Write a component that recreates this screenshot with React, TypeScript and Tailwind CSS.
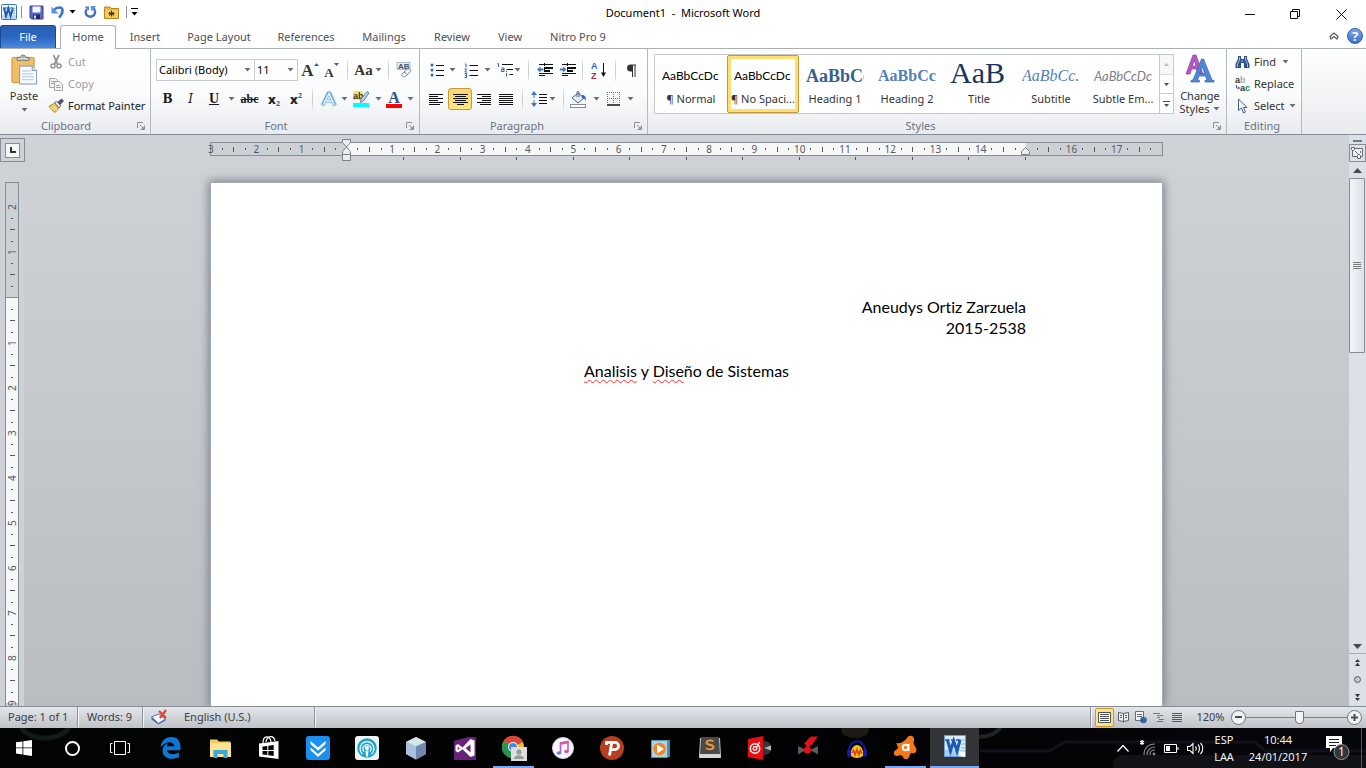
import React from "react";
import type { ReactNode } from "react";

type Kids = { children?: ReactNode };

/* ---------- shared pieces ---------- */

function Caret({ dark = false }: { dark?: boolean }) {
  return (
    <svg width="7" height="4" viewBox="0 0 7 4" className={dark ? "shrink-0 text-black" : "shrink-0 text-[#6a6e73]"} aria-hidden="true">
      <path d="M0.5 0h6L3.5 3.6z" fill="currentColor" />
    </svg>
  );
}

function DropCaret({ label }: { label: string }) {
  return (
    <button aria-label={label} className="flex h-[22px] w-[10px] shrink-0 items-center justify-center">
      <Caret />
    </button>
  );
}

function Tool({ label, className = "w-[22px]", children }: Kids & { label: string; className?: string }) {
  return (
    <button aria-label={label} title={label} className={`flex h-[22px] shrink-0 items-center justify-center ${className}`}>
      {children}
    </button>
  );
}

function Divider({ className = "mx-1" }: { className?: string }) {
  return <span className={`h-[22px] w-px shrink-0 bg-linear-to-b from-[#eceef0] via-[#c3c7cc] to-[#e3e5e8] ${className}`} />;
}

function Launcher({ label }: { label: string }) {
  return (
    <button aria-label={label} className="flex h-3 w-3 items-center justify-center text-[#8b9097]">
      <svg width="8" height="8" viewBox="0 0 8 8" fill="none" stroke="currentColor" aria-hidden="true">
        <path d="M0.5 6V0.5H6M3 3l3 3M7.5 3.5v4h-4" />
        <path d="M7 4.5V7H4.5z" fill="currentColor" stroke="none" />
      </svg>
    </button>
  );
}

function Group({ title, launcher = true, className = "", titleClass = "", children }: Kids & { title: string; launcher?: boolean; className?: string; titleClass?: string }) {
  return (
    <section aria-label={title} className={`flex shrink-0 flex-col border-r border-[#b4b9c0] bg-linear-to-b from-white via-[#fbfcfd] to-[#e8ebef] ${className}`}>
      <div className="min-h-0 flex-1">{children}</div>
      <div className="flex h-[17px] items-center pr-[3px]">
        <h2 className={`flex-1 pl-3 text-center text-[#6b7280] ${titleClass}`}>{title}</h2>
        <span className="flex w-3 justify-end">{launcher && <Launcher label={`${title} options`} />}</span>
      </div>
    </section>
  );
}

/* ---------- title bar ---------- */

function WordLogo({ size }: { size: number }) {
  return (
    <svg width={size} height={size} viewBox="0 0 16 16" aria-hidden="true">
      <rect x="0.5" y="0.5" width="15" height="15" rx="1" fill="#eaf3fc" stroke="#3d78bd" />
      <path d="M1 11h14v4H1z" fill="#b9d6f2" />
      <path d="M2 4h3.6M5.4 4h3M9 4h3.6" stroke="#1a559e" strokeWidth="1.2" />
      <path d="M3 4l2 8 2.4-7.6L9.6 12 12 4" fill="none" stroke="#1c5cab" strokeWidth="2" />
      <path d="M11.5 4.5h2.5M12 7h2M11.500 9.500h2.500" stroke="#74a5d8" />
    </svg>
  );
}

function TitleBar() {
  return (
    <header className="grid h-6 shrink-0 grid-cols-[1fr_auto_1fr] items-center">
      <div className="flex items-center pl-[1px]">
        <WordLogo size={16} />
        <span className="mx-1 h-3 w-px bg-[#8d9197]" />
        <button aria-label="Save" className="ml-[3px] flex w-[22px] items-center">
          <svg width="15" height="15" viewBox="0 0 15 15" aria-hidden="true">
            <path d="M1 1h13v13H2.500L1 12.500z" fill="#5a68c8" stroke="#39418f" />
            <path d="M3.500 1.500h8v6h-8z" fill="#f4f6ff" />
            <path d="M4 9.500h7v4.500H4z" fill="#23295c" />
            <path d="M5 10.500h2v3H5z" fill="#dfe4f8" />
          </svg>
        </button>
        <button aria-label="Undo" className="flex w-[18px] items-center">
          <svg width="14" height="14" viewBox="0 0 14 14" aria-hidden="true">
            <path d="M3 5C6 1.500 11.500 1.500 11.500 5.500c0 3-1.500 5-3.500 7" fill="none" stroke="#3f74c6" strokeWidth="2.600" />
            <path d="M0.500 1.500v7H7.500z" fill="#5b91dc" />
          </svg>
        </button>
        <button aria-label="Undo history" className="flex w-[15px] items-center"><Caret dark /></button>
        <button aria-label="Repeat" className="flex w-[20px] items-center">
          <svg width="13" height="14" viewBox="0 0 13 14" aria-hidden="true">
            <path d="M3 4C0.500 7 1.500 11.500 6.500 11.700 11.500 11.500 12.500 6 9 2.500" fill="none" stroke="#3f74c6" strokeWidth="2.400" />
            <path d="M6.500 1h5.500L7.500 6.500z" fill="#5b91dc" />
            <path d="M0.500 1.500h4.500v4z" fill="#4a80d0" />
          </svg>
        </button>
        <button aria-label="Open folder" className="flex w-[22px] items-center">
          <svg width="15" height="13" viewBox="0 0 15 13" aria-hidden="true">
            <path d="M0.500 2.500V1H6l1 1.500h7.500v10H0.500z" fill="#eab845" stroke="#b98216" />
            <path d="M1 4h13v8H1z" fill="#f5ca62" />
            <path d="M7.500 4.500v6M5 6l5 3.500M10 6L5 9.500M4.500 7.500h6" stroke="#3c3220" />
          </svg>
        </button>
        <span className="mr-1 h-3 w-px bg-[#8d9197]" />
        <button aria-label="Customize quick access toolbar" className="flex flex-col items-center gap-[3px]">
          <span className="h-px w-[7px] bg-black" />
          <Caret dark />
        </button>
      </div>
      <h1 className="pt-[2px] text-[11px] leading-4 text-black">Document1&nbsp; - &nbsp;Microsoft Word</h1>
      <div className="flex items-center justify-end pt-1">
        <button aria-label="Minimize" className="flex h-5 w-[46px] items-center justify-center">
          <svg width="10" height="10" aria-hidden="true"><path d="M0 5.500h10" stroke="#111" /></svg>
        </button>
        <button aria-label="Restore" className="flex h-5 w-[44px] items-center justify-center">
          <svg width="10" height="10" fill="none" stroke="#111" aria-hidden="true"><path d="M0.500 2.500h7v7h-7zM2.500 2.500v-2h7v7h-2" /></svg>
        </button>
        <button aria-label="Close" className="flex h-5 w-[49px] items-center justify-center">
          <svg width="11" height="11" fill="none" stroke="#111" aria-hidden="true"><path d="M0.500 0.500l10 10M10.500 0.500l-10 10" /></svg>
        </button>
      </div>
    </header>
  );
}

/* ---------- ribbon tabs ---------- */

const tabs = [
  { name: "Insert", width: "w-[58px]" },
  { name: "Page Layout", width: "w-[90px]" },
  { name: "References", width: "w-[84px]" },
  { name: "Mailings", width: "w-[72px]" },
  { name: "Review", width: "w-[64px]" },
  { name: "View", width: "w-[52px]" },
  { name: "Nitro Pro 9", width: "w-[84px]" },
];

function TabRow() {
  return (
    <nav className="flex h-[25px] shrink-0 items-end border-b border-[#abb0b6] text-[#4b4f54]">
      <button className="h-[23px] w-14 rounded-t-[3px] border border-b-0 border-[#1d4a95] bg-linear-to-b from-[#2a5fb4] via-[#2c66bf] to-[#4a8be0] text-white">File</button>
      <button className="-mb-px ml-1 h-6 w-[56px] rounded-t-[3px] border border-b-0 border-[#abb0b6] bg-white pb-[2px]">Home</button>
      {tabs.map((t) => (
        <button key={t.name} className={`h-[22px] ${t.width}`}>{t.name}</button>
      ))}
      <div className="ml-auto flex items-center gap-2 self-center pr-[3px]">
        <button aria-label="Minimize the ribbon">
          <svg width="10" height="8" viewBox="0 0 10 8" fill="none" stroke="#55595e" strokeWidth="1.200" aria-hidden="true">
            <path d="M1 4.500L5 1l4 3.500L8 7 5 4.500 2 7z" />
          </svg>
        </button>
        <button aria-label="Help" className="flex h-4 w-4 items-center justify-center rounded-full border border-[#2b5cae] bg-linear-to-b from-[#7aa7ea] to-[#3a70cb] text-[13px] leading-none font-bold text-white">?</button>
      </div>
    </nav>
  );
}

/* ---------- ribbon groups ---------- */

function Clipboard() {
  return (
    <Group title="Clipboard" titleClass="pr-[15px]" className="w-[151px]">
      <div className="flex h-full pt-[2px]">
        <button className="flex w-[48px] flex-col items-center pt-[3px] text-[#333]">
          <svg width="28" height="31" viewBox="0 0 28 32" aria-hidden="true">
            <rect x="1.500" y="3.500" width="23" height="26" rx="1.500" fill="#f0bd62" stroke="#c8933c" />
            <path d="M7 6.500V3.500h3.500a2.500 2.500 0 015 0H19v3z" fill="#d9dce0" stroke="#6d7278" />
            <circle cx="13" cy="3.200" r="1" fill="#fff" stroke="#6d7278" strokeWidth=".6" />
            <path d="M9.500 12.500h13l4.500 4.500v14H9.500z" fill="#f7faff" stroke="#8296b5" />
            <path d="M22.500 12.500V17H27" fill="#dbe6f5" stroke="#8296b5" />
            <path d="M12 17.500h9M12 20.500h12M12 23.500h12M12 26.500h12" stroke="#b3c4dd" />
          </svg>
          <span className="mt-[3px] leading-4">Paste</span>
          <span className="mt-1"><Caret /></span>
        </button>
        <div className="flex flex-col items-start">
          <button className="flex h-[22px] items-center gap-1 text-[#9a9da1]">
            <svg width="16" height="16" viewBox="0 0 16 16" fill="none" stroke="#8f9296" aria-hidden="true">
              <path d="M5.500 1l4 9M11 1L6.500 10" strokeWidth="1.800" />
              <circle cx="5" cy="12" r="2" strokeWidth="1.500" /><circle cx="11" cy="12" r="2" strokeWidth="1.500" />
            </svg>
            Cut
          </button>
          <button className="flex h-[22px] items-center gap-1 text-[#9a9da1]">
            <svg width="16" height="16" viewBox="0 0 16 16" fill="#f2f3f4" stroke="#a0a3a8" aria-hidden="true">
              <path d="M1.500 2.500h6l2 2v7h-8z" /><path d="M3 5.500h4M3 7.500h4" />
              <path d="M6.500 5.500h5l3 3v6h-8z" /><path d="M8 9.500h4M8 11.500h5" />
            </svg>
            Copy
          </button>
          <button className="flex h-[22px] items-center gap-1 text-[#222]">
            <svg width="16" height="16" viewBox="0 0 16 16" aria-hidden="true">
              <path d="M1 8l6-3 4 5-4 4.500C5 13 2.500 11 1 8z" fill="#e8c557" stroke="#a5842c" strokeWidth=".8" />
              <path d="M3 9l4 4M5 7.500l4 4.500" stroke="#fff0b0" />
              <path d="M6.500 4.500l2-1.500 4.500 5-2 2z" fill="#e8eaee" stroke="#55585e" strokeWidth=".8" />
              <path d="M10 4l3.500-3L15.500 3 12 6.500z" fill="#5a4a7a" stroke="#35304d" strokeWidth=".7" />
            </svg>
            Format Painter
          </button>
        </div>
      </div>
    </Group>
  );
}

function FontGroup() {
  return (
    <Group title="Font" titleClass="pr-[15px]" className="w-[269px]">
      <div className="flex items-center pt-[10px] pl-[5px]">
        <label className="relative flex">
          <select aria-label="Font" className="h-[22px] w-[99px] appearance-none border border-[#c9ccd1] bg-white pl-[2px] text-[11px] text-black">
            <option>Calibri (Body)</option>
          </select>
          <span className="pointer-events-none absolute top-[9px] right-1"><Caret /></span>
        </label>
        <label className="relative -ml-px flex">
          <select aria-label="Font size" className="h-[22px] w-[44px] appearance-none border border-[#c9ccd1] bg-white pl-[2px] text-[11px] text-black">
            <option>11</option>
          </select>
          <span className="pointer-events-none absolute top-[9px] right-1"><Caret /></span>
        </label>
        <Tool label="Grow font" className="ml-[2px] w-[20px]">
          <span className="font-['Liberation_Serif',serif] text-[17px] leading-none font-bold text-[#333]">A</span>
          <svg width="5" height="3" className="mb-3" aria-hidden="true"><path d="M0 3h5L2.500 0z" fill="#2f63b8" /></svg>
        </Tool>
        <Tool label="Shrink font" className="w-[23px]">
          <span className="pt-1 font-['Liberation_Serif',serif] text-[13px] leading-none font-bold text-[#333]">A</span>
          <svg width="5" height="3" className="mb-3" aria-hidden="true"><path d="M0 0h5L2.500 3z" fill="#2f63b8" /></svg>
        </Tool>
        <Divider className="mx-1" />
        <Tool label="Change case" className="w-[32px] gap-[2px]">
          <span className="font-['Liberation_Serif',serif] text-[15px] leading-none font-bold text-[#333]">Aa</span>
          <Caret />
        </Tool>
        <Divider className="mx-1" />
        <Tool label="Clear formatting" className="ml-[1px] w-[20px]">
          <svg width="16" height="16" viewBox="0 0 16 16" aria-hidden="true">
            <rect x="1" y="0.500" width="13" height="7" fill="#e3eaf5" stroke="#9fb0ca" strokeWidth=".8" />
            <text x="2" y="7" fontSize="8" fontWeight="700" fill="#44546e" fontFamily="Liberation Sans, sans-serif">AB</text>
            <path d="M6 12l5-5c1.500-1 4 .5 3.500 2.500l-5 5C7.500 15.500 5 14 6 12z" fill="#f3f6fb" stroke="#7288ad" />
            <path d="M8 10l4 3" stroke="#7288ad" />
          </svg>
        </Tool>
      </div>
      <div className="flex items-center pt-[7px] pl-[5px]">
        <Tool label="Bold" className="w-[23px]"><span className="font-['DejaVu_Serif',serif] text-[12px] font-bold text-[#1a1a1a]">B</span></Tool>
        <Tool label="Italic" className="w-[23px]"><span className="font-['DejaVu_Serif',serif] text-[12px] text-[#1a1a1a] italic">I</span></Tool>
        <Tool label="Underline" className="w-[24px]"><span className="font-['Liberation_Serif',serif] text-[14px] leading-none font-bold text-[#1a1a1a] underline">U</span></Tool>
        <DropCaret label="Underline style" />
        <Tool label="Strikethrough" className="w-[27px]"><span className="font-['Liberation_Serif',serif] text-[12px] font-bold text-[#1a1a1a] line-through">abc</span></Tool>
        <Tool label="Subscript"><span className="text-[13px] leading-none font-extrabold text-[#222]">x</span><span className="mt-2 text-[7px] leading-none font-bold text-[#2f63b8]">2</span></Tool>
        <Tool label="Superscript"><span className="text-[13px] leading-none font-extrabold text-[#222]">x</span><span className="mb-2 text-[7px] leading-none font-bold text-[#2f63b8]">2</span></Tool>
        <Divider className="mr-[6px] ml-[5px]" />
        <Tool label="Text effects" className="w-[20px]">
          <svg width="18" height="18" viewBox="0 0 18 18" fill="none" aria-hidden="true">
            <path d="M2.500 15.500L8.500 3h1L15 15.500M5.500 11h7" stroke="#d6e9f8" strokeWidth="5" strokeLinejoin="round" />
            <path d="M2.500 15.500L8.500 3h1L15 15.500M5.500 11h7" stroke="#68a9dd" strokeWidth="3.200" strokeLinejoin="round" />
            <path d="M3 15L9 3.500 14.500 15M6 11h6" stroke="#f2f9ff" strokeWidth="1.400" />
          </svg>
        </Tool>
        <DropCaret label="Text effects menu" />
        <Tool label="Highlight color" className="w-[24px]">
          <svg width="17" height="18" viewBox="0 0 17 18" aria-hidden="true">
            <rect x="0" y="1" width="10" height="9" fill="#f3ec5c" />
            <text x="0" y="9" fontSize="9" fontWeight="700" fill="#333" fontFamily="Liberation Sans, sans-serif">ab</text>
            <path d="M14 1.500l2 1.500-5.500 8-3 1.500L8 9z" fill="#bcd1ee" stroke="#4c6795" strokeWidth=".8" />
            <rect x="0" y="13" width="16" height="4" fill="#00ffff" />
          </svg>
        </Tool>
        <DropCaret label="Highlight colors" />
        <Tool label="Font color" className="w-[22px]">
          <span className="flex flex-col items-center">
            <span className="font-['Liberation_Serif',serif] text-[16px] leading-[13px] font-bold text-[#2d4f8e]">A</span>
            <span className="h-1 w-4 bg-[#ff0000]" />
          </span>
        </Tool>
        <DropCaret label="Font colors" />
      </div>
    </Group>
  );
}

function Lines({ rows }: { rows: [number, number][] }) {
  return (
    <svg width="15" height="13" viewBox="0 0 15 13" stroke="#111" aria-hidden="true">
      {rows.map(([a, b], i) => <path key={i} d={`M${a} ${i * 2 + 1.5}H${b}`} />)}
    </svg>
  );
}

function IndentIcon({ right }: { right: boolean }) {
  return (
    <svg width="17" height="15" viewBox="0 0 17 15" aria-hidden="true">
      <path d="M2 1.500h14M2 10.500h14M2 12.500h6" stroke="#111" />
      <path d="M7 4h9v2H7zM7 7h6v2H7z" fill="#111" />
      <path d="M7.500 0v14" stroke="#111" strokeDasharray="1 1" />
      {right
        ? <path d="M6.500 6.500L3 3.500v2H0v2h3v2z" fill="#3f74cf" />
        : <path d="M0 6.500l3.500-3v2h3v2h-3v2z" fill="#3f74cf" />}
    </svg>
  );
}

function Paragraph() {
  return (
    <Group title="Paragraph" titleClass="pr-[30px]" className="w-[228px]">
      <div className="flex items-center pt-[10px] pl-[6px]">
        <Tool label="Bullets" className="w-[21px]">
          <svg width="14" height="14" viewBox="0 0 14 14" aria-hidden="true">
            <g fill="#3566b8"><circle cx="2" cy="2" r="1.500" /><circle cx="2" cy="7" r="1.500" /><circle cx="2" cy="12" r="1.500" /></g>
            <path d="M6 2.500h8M6 7.500h8M6 12.500h8" stroke="#111" />
          </svg>
        </Tool>
        <DropCaret label="Bullet library" />
        <Tool label="Numbering" className="ml-[3px] w-[22px]">
          <svg width="15" height="15" viewBox="0 0 15 15" aria-hidden="true">
            <path d="M1 1h1v3.500M0.500 6h2L1 9h2M0.500 10.500h2v4h-2M1 12.500h1.500" fill="none" stroke="#3566b8" />
            <path d="M5.500 2.500H14M5.500 7.500H14M5.500 12.500H14" stroke="#111" />
          </svg>
        </Tool>
        <DropCaret label="Numbering library" />
        <Tool label="Multilevel list" className="ml-[2px] w-[30px]">
          <svg width="17" height="16" viewBox="0 0 17 16" fill="none" aria-hidden="true">
            <path d="M0.500 1.500h1V5M4.500 6h2.500v3.500H4.500v-2H7M9.500 11v3.500M9.500 9v1" stroke="#3566b8" />
            <path d="M5 2.500h11M9.500 7.500H16M12.500 12.500H16" stroke="#111" />
          </svg>
          <Caret />
        </Tool>
        <Divider className="mx-1" />
        <Tool label="Decrease indent" className="ml-[1px] w-[23px]"><IndentIcon right={false} /></Tool>
        <Tool label="Increase indent"><IndentIcon right /></Tool>
        <Divider className="mr-1 ml-[3px]" />
        <Tool label="Sort" className="w-[24px]">
          <svg width="16" height="19" viewBox="0 0 16 19" aria-hidden="true">
            <text x="0" y="8" fontSize="9" fontWeight="700" fill="#2f63b8" fontFamily="Liberation Sans, sans-serif">A</text>
            <text x="0" y="18" fontSize="9" fontWeight="700" fill="#a3303a" fontFamily="Liberation Sans, sans-serif">Z</text>
            <path d="M12.500 2v12" stroke="#111" /><path d="M10 11.500h5L12.500 16z" fill="#111" />
          </svg>
        </Tool>
        <Divider className="mr-[3px] ml-1" />
        <Tool label="Show paragraph marks" className="w-[24px]">
          <svg width="11" height="13" viewBox="0 0 11 13" aria-hidden="true">
            <path d="M10 .5H4.500a3.500 3.500 0 000 7H6V13H7V1.500h1.500V13h1V1.500H10z" fill="#333" />
          </svg>
        </Tool>
      </div>
      <div className="flex items-center pt-[7px] pl-[5px]">
        <Tool label="Align left" className="w-[23px]"><Lines rows={[[0, 14], [0, 9], [0, 14], [0, 9], [0, 14], [0, 11]]} /></Tool>
        <Tool label="Center" className="w-6 rounded-[3px] border border-[#c29a3a] bg-linear-to-b from-[#fbd573] to-[#ffe780]"><Lines rows={[[0, 15], [2, 13], [0, 15], [2, 13], [0, 15], [4, 11]]} /></Tool>
        <Tool label="Align right" className="w-[23px]"><Lines rows={[[1, 15], [6, 15], [1, 15], [6, 15], [1, 15], [4, 15]]} /></Tool>
        <Tool label="Justify" className="w-[23px]"><Lines rows={[[0, 14], [0, 14], [0, 14], [0, 14], [0, 14], [0, 14]]} /></Tool>
        <Divider className="mx-1" />
        <Tool label="Line spacing" className="w-[32px] gap-[2px]">
          <svg width="16" height="16" viewBox="0 0 16 16" aria-hidden="true">
            <path d="M3 2v12" stroke="#3f74cf" strokeDasharray="5 2" /><path d="M0 4h6L3 0zM0 12h6l-3 4z" fill="#3f74cf" />
            <path d="M8 3.500h8M8 6.500h8M8 9.500h8M8 12.500h8" stroke="#111" />
          </svg>
          <Caret />
        </Tool>
        <Divider className="mr-[3px] ml-1" />
        <Tool label="Shading" className="w-[24px]">
          <svg width="18" height="17" viewBox="0 0 18 17" aria-hidden="true">
            <path d="M2 7l6-5 6 5-6 5z" fill="#e3edf9" stroke="#49658f" />
            <path d="M7 6V1.500c0-1.500 2-1.500 2 0V6" fill="none" stroke="#49658f" />
            <path d="M12 4c3 0 4 2 4 6-1-2-2-3-4-3z" fill="#2f63b8" />
            <rect x="0.500" y="13.500" width="15" height="3" fill="#fff" stroke="#8a8d92" />
          </svg>
        </Tool>
        <DropCaret label="Shading colors" />
        <Tool label="Borders" className="w-[24px]">
          <svg width="13" height="14" viewBox="0 0 13 14" fill="none" aria-hidden="true">
            <path d="M0.500 0v11M6.500 0v11M12.500 0v11M0 0.500h13M0 6.500h13" stroke="#6b6f75" strokeDasharray="1 1" />
            <path d="M0 13h13" stroke="#111" strokeWidth="1.500" />
          </svg>
        </Tool>
        <DropCaret label="Border types" />
      </div>
    </Group>
  );
}

const styles = [
  { name: "¶ Normal", sample: "AaBbCcDc", look: "font-['Lato','Liberation_Sans',sans-serif] text-[12px] leading-none text-black" },
  { name: "¶ No Spaci...", sample: "AaBbCcDc", look: "font-['Lato','Liberation_Sans',sans-serif] text-[12px] leading-none text-black", on: true },
  { name: "Heading 1", sample: "AaBbCc", look: "font-['Liberation_Serif',serif] text-[18px] leading-none font-bold text-[#365f91]" },
  { name: "Heading 2", sample: "AaBbCc", look: "font-['Liberation_Serif',serif] text-[16px] leading-none font-bold text-[#4f81bd]" },
  { name: "Title", sample: "AaB", look: "self-start font-['Liberation_Serif',serif] text-[30px] leading-[20px] text-[#17365d]" },
  { name: "Subtitle", sample: "AaBbCc.", look: "font-['Liberation_Serif',serif] text-[16px] leading-none text-[#4f81bd] italic" },
  { name: "Subtle Em...", sample: "AaBbCcDc", look: "font-['Lato','Liberation_Sans',sans-serif] text-[13px] leading-none text-[#808080] italic" },
];

function Styles() {
  return (
    <Group title="Styles" titleClass="pr-[30px]" className="w-[579px]">
      <div className="flex pt-[5px] pl-[6px]">
        <div className="flex h-[60px] shrink-0 border border-[#c5c8cd] bg-white">
          {styles.map((s) => (
            <button
              key={s.name}
              className={
                s.on
                  ? "flex w-[72px] flex-col items-center rounded-[2px] border border-[#c29a3a] px-[3px] pt-[7px] inset-ring-[3px] inset-ring-[#ffdf72]"
                  : "flex w-[72px] flex-col items-center px-1 pt-2"
              }
            >
              <span className="flex h-[26px] w-[58px] shrink-0 items-center overflow-hidden">
                <span className={s.look}>{s.sample}</span>
              </span>
              <span className="mt-[2px] leading-4 whitespace-nowrap text-[#333]">{s.name}</span>
            </button>
          ))}
          <div className="flex w-[14px] flex-col border-l border-[#c5c8cd]">
            <button aria-label="Previous styles" className="flex flex-1 items-center justify-center border-b border-[#dcdee1] bg-[#f6f7f8]">
              <svg width="5" height="3" aria-hidden="true"><path d="M0 3h5L2.500 0z" fill="#b5b8bc" /></svg>
            </button>
            <button aria-label="Next styles" className="flex flex-1 items-center justify-center border-b border-[#c5c8cd]">
              <svg width="5" height="3" aria-hidden="true"><path d="M0 0h5L2.500 3z" fill="#4a4e53" /></svg>
            </button>
            <button aria-label="More styles" className="flex flex-1 flex-col items-center justify-center gap-[2px]">
              <span className="h-px w-[7px] bg-[#4a4e53]" />
              <svg width="5" height="3" aria-hidden="true"><path d="M0 0h5L2.500 3z" fill="#4a4e53" /></svg>
            </button>
          </div>
        </div>
        <button className="flex w-[52px] shrink-0 flex-col items-center text-[#333]">
          <svg width="30" height="29" viewBox="0 0 30 29" aria-hidden="true">
            <path d="M1 20L8 1h3l7 19h-5l-1.500-5h-5L5 20zM7.500 12h3.500L9.200 6z" fill="#b55bc0" stroke="#8c3c98" strokeWidth=".7" />
            <path d="M6 28v-1.500l2-.5 8.500-21h2L27 26l2 .5V28h-9v-1.500l2-.5-1.500-4h-6.500l-1.500 4 2 .5V28zM14.500 19.500h5.200L17 12z" fill="#4f88d8" stroke="#2f60a9" strokeWidth=".7" />
          </svg>
          <span className="mt-[6px] leading-[13px]">Change</span>
          <span className="flex items-center gap-1 leading-[13px]">Styles <Caret /></span>
        </button>
      </div>
    </Group>
  );
}

function Editing() {
  return (
    <Group title="Editing" titleClass="pr-px" launcher={false} className="w-[75px]">
      <div className="flex flex-col items-start pt-[2px] pl-[8px] text-[#333]">
        <button className="flex h-[22px] items-center gap-[4px]">
          <svg width="15" height="14" viewBox="0 0 15 14" aria-hidden="true">
            <path d="M3 1h3v3h3V1h3v3l2.500 5v4H9V8H6v5H.5V9L3 4z" fill="#2d5088" />
            <path d="M4.500 2v3L2.500 9v3M10.500 2v3l2 4v3M7 5v2" stroke="#a9c1e6" fill="none" />
          </svg>
          Find <span className="ml-[2px]"><Caret /></span>
        </button>
        <button className="flex h-[22px] items-center gap-[4px]">
          <svg width="15" height="16" viewBox="0 0 15 16" fontFamily="Liberation Sans, sans-serif" fontSize="9" fontWeight="700" aria-hidden="true">
            <text x="0" y="7" fill="#333">a<tspan fill="#a5a8ad">b</tspan></text>
            <text x="5" y="15" fill="#333">a<tspan fill="#198a2c">c</tspan></text>
            <path d="M1.500 9v3h3M3 10.500L4.500 12 3 13.500" fill="none" stroke="#3566b8" />
          </svg>
          Replace
        </button>
        <button className="flex h-[22px] items-center gap-[4px]">
          <svg width="15" height="16" viewBox="0 0 15 16" aria-hidden="true">
            <path d="M3.500 1v11.500l3-2.500 2 5 2-1-2-4.500h3.500z" fill="#f4f8fe" stroke="#44608f" />
          </svg>
          Select <Caret />
        </button>
      </div>
    </Group>
  );
}

/* ---------- rulers ---------- */

const horizontal = Array.from({ length: 21 }, (_, i) => i - 2);
const vertical = [2, 1, 0, 1, 2, 3, 4, 5, 6, 7, 8, 9];

function HorizontalRuler() {
  return (
    <div className="relative mt-[7px] w-[953px] shrink-0 self-center">
      <div className="grid h-[14px] grid-cols-[repeat(21,minmax(0,1fr))] border border-[#868d97] text-[10px] leading-3 text-[#55595f]">
        {horizontal.map((n, i) => (
          <div key={n} className={`relative flex items-center justify-evenly ${n > 0 && n <= 15 ? "bg-[#f6f7f7]" : "bg-[#cdd0d5]"}`}>
            {i === 0 && <span className="absolute -left-[3px]">3</span>}
            <span className="h-[2px] w-px bg-[#55595f]" />
            <span className="h-[5px] w-px bg-[#55595f]" />
            <span className="h-[2px] w-px bg-[#55595f]" />
            {n !== 0 && n !== 15 && n !== 18 && (
              <span className="absolute -right-2 z-10 w-4 text-center">{Math.abs(n)}</span>
            )}
          </div>
        ))}
      </div>
      <div className="mr-[137px] ml-[193px] flex h-[4px] justify-between">
        {Array.from({ length: 12 }, (_, i) => <span key={i} className="mt-px h-[3px] w-px bg-[#55595f]" />)}
      </div>
      <svg width="9" height="22" viewBox="0 0 9 22" fill="#eceded" stroke="#7d8289" className="absolute -top-[3px] left-[132px] z-20" aria-hidden="true">
        <path d="M.5.5h8v3L4.500 8l-4-4.500zM4.500 8l4 4.500v3h-8v-3zM.5 15.500h8v6h-8z" />
      </svg>
      <svg width="9" height="8" viewBox="0 0 9 8" fill="#eceded" stroke="#7d8289" className="absolute top-[5px] right-[133px] z-20" aria-hidden="true">
        <path d="M4.500.5l4 4v3h-8v-3z" />
      </svg>
    </div>
  );
}

function VerticalRuler() {
  return (
    <div className="flex w-6 shrink-0 flex-col items-start bg-[#ced1d6]">
      <button aria-label="Tab selector" className="mt-[3px] flex h-6 w-[25px] shrink-0 items-center justify-center border border-[#868d97]">
        <span className="flex h-[15px] w-[15px] items-center justify-center border border-[#868d97] bg-[#f6f6f7]">
          <span className="h-[6px] w-[6px] border-b-2 border-l-2 border-[#333]" />
        </span>
      </button>
      <div className="mt-5 ml-[5px] flex min-h-0 w-[14px] flex-1 flex-col overflow-hidden border border-b-0 border-[#868d97] text-[10px] leading-3 text-[#55595f]">
        {vertical.map((n, i) => (
          <div
            key={i}
            className={`relative flex shrink-0 flex-col items-center justify-evenly ${i === 0 ? "h-6" : i === 2 ? "h-[46px]" : "h-[45px]"} ${i < 3 ? "bg-[#cdd0d5]" : "bg-[#f6f7f7]"} ${i === 2 ? "border-b border-[#868d97]" : ""}`}
          >
            {i > 0 && (
              <>
                <span className="h-px w-[2px] bg-[#55595f]" />
                <span className="h-px w-[5px] bg-[#55595f]" />
                <span className="h-px w-[2px] bg-[#55595f]" />
              </>
            )}
            {n > 0 && <span className="absolute -bottom-[6px] z-10 flex h-3 w-3 -rotate-90 items-center justify-center">{n}</span>}
          </div>
        ))}
      </div>
    </div>
  );
}

function ScrollBar() {
  return (
    <div className="flex w-[17px] shrink-0 flex-col items-center bg-[#dbe0e9]">
      <span className="mt-[5px] h-[2px] w-[9px] shrink-0 bg-[#737980]" />
      <button aria-label="Toggle ruler" className="mt-[2px] flex h-[18px] w-[17px] shrink-0 items-center justify-center border border-[#868d97]">
        <svg width="13" height="13" viewBox="0 0 13 13" fill="#f4eef2" stroke="#666b72" aria-hidden="true">
          <path d="M1.500 1.500h10v8h-10z" />
          <path d="M.5.5h3v2L2 4 .5 2.500zM6.500 8.500L8 7l1.500 1.500v3h-3z" />
          <path d="M4 4l3 3M9.500 4v2" fill="none" />
        </svg>
      </button>
      <button aria-label="Scroll up" className="flex h-4 w-full shrink-0 items-center justify-center">
        <svg width="9" height="5" aria-hidden="true"><path d="M0 5h9L4.500 0z" fill="#444a52" /></svg>
      </button>
      <div className="flex min-h-0 w-full flex-1 flex-col">
        <div className="flex h-[38%] w-[16px] flex-col items-center justify-center gap-px rounded-[1px] border border-[#868d97] bg-linear-to-r from-[#f3f5f9] to-[#dde1e8]">
          <span className="h-px w-2 bg-[#777d85]" /><span className="h-px w-2 bg-[#777d85]" />
          <span className="h-px w-2 bg-[#777d85]" /><span className="h-px w-2 bg-[#777d85]" />
        </div>
      </div>
      <button aria-label="Scroll down" className="flex h-[15px] w-full shrink-0 items-center justify-center border-b border-[#a8aeb8]">
        <svg width="9" height="5" aria-hidden="true"><path d="M0 0h9L4.500 5z" fill="#444a52" /></svg>
      </button>
      <button aria-label="Previous page" className="flex h-4 w-full shrink-0 items-center justify-center">
        <svg width="5" height="7" aria-hidden="true"><path d="M0 3h5L2.500 0zM0 7h5L2.500 3.500z" fill="#333a42" /></svg>
      </button>
      <button aria-label="Select browse object" className="flex h-[19px] w-full shrink-0 items-center justify-center">
        <span className="h-[7px] w-[7px] rounded-full border border-[#565b62] bg-[#c6cad0]" />
      </button>
      <button aria-label="Next page" className="flex h-[17px] w-full shrink-0 items-center justify-center">
        <svg width="5" height="7" aria-hidden="true"><path d="M0 0h5L2.500 3.500zM0 4h5L2.500 7z" fill="#333a42" /></svg>
      </button>
    </div>
  );
}

/* ---------- document ---------- */

function Misspelled({ children }: Kids) {
  return <span className="underline decoration-red-500 decoration-wavy decoration-1 underline-offset-2">{children}</span>;
}

function Workspace() {
  return (
    <main className="flex min-h-0 flex-1 border-t border-[#868d97] bg-linear-to-b from-[#cfd2d7] to-[#b9bcc0]">
      <VerticalRuler />
      <div className="flex min-w-0 flex-1 flex-col overflow-hidden">
        <HorizontalRuler />
        <article className="mt-[22px] min-h-0 w-[953px] flex-1 self-center border border-b-0 border-[#a3abb5] bg-white px-[136px] pt-[113px] font-['Lato','Liberation_Sans',sans-serif] text-[16px] leading-[21px] text-black [font-variant-ligatures:none] shadow-[0_0_9px_1px_#777c82]">
          <p className="text-right">Aneudys Ortiz Zarzuela</p>
          <p className="text-right">2015-2538</p>
          <p className="mt-[22px] text-center">
            <Misspelled>Analisis</Misspelled> y <Misspelled>Dise</Misspelled>ño de Sistemas
          </p>
        </article>
      </div>
      <ScrollBar />
    </main>
  );
}

/* ---------- status bar ---------- */

function StatusRule() {
  return <span className="h-5 w-[2px] border-l border-[#8e939a] bg-[#f3f4f6]" />;
}

function StatusBar() {
  return (
    <footer className="flex h-[22px] shrink-0 items-center border-t border-[#868d97] bg-linear-to-b from-[#e3e6ea] to-[#bfc3c8] pb-[1px] text-[#3c4046]">
      <span className="w-[77px] pl-2">Page: 1 of 1</span>
      <StatusRule />
      <span className="w-[63px] pl-2 whitespace-nowrap">Words: 9</span>
      <StatusRule />
      <button aria-label="Proofing errors" className="flex w-[38px] pl-[7px]">
        <svg width="17" height="16" viewBox="0 0 17 16" aria-hidden="true">
          <path d="M.5 8l7-3 7 5-7 4.500z" fill="#f2f6fc" stroke="#54709f" /><path d="M.5 8v2.500l7 5 7-4V10l-7 4.500z" fill="#3f6cb4" />
          <path d="M8 2l7 7M15 1L9 9" stroke="#ea4030" strokeWidth="2.200" />
        </svg>
      </button>
      <span className="w-[132px] pl-[2px]">English (U.S.)</span>
      <StatusRule />
      <div className="ml-auto flex items-center">
        <StatusRule />
        <div className="ml-[3px] flex items-center">
          <button aria-label="Print layout" className="flex h-[19px] w-[19px] items-center justify-center rounded-[2px] border border-[#c29a3a] bg-[#ffe28a]">
            <svg width="13" height="13" viewBox="0 0 13 13" fill="#fff" stroke="#4c5057" aria-hidden="true"><path d="M.5 1.500h12v10H.5zM2 3.500h9M2 5.500h9M2 7.500h9M2 9.500h9" /></svg>
          </button>
          <button aria-label="Full screen reading" className="flex w-[18px] justify-center">
            <svg width="11" height="12" viewBox="0 0 11 12" fill="#eef0f3" stroke="#5a5f66" aria-hidden="true"><path d="M.5 1.500l5 1 5-1v8l-5 1-5-1zM5.500 2.500v9M2 4.500h2M2 6.500h2M7 4.500h2M7 6.500h2" /></svg>
          </button>
          <button aria-label="Web layout" className="flex w-[17px] justify-center">
            <svg width="12" height="13" viewBox="0 0 12 13" aria-hidden="true"><path d="M.5.500h8v9h-8z" fill="#f1f3f6" stroke="#6a6f77" /><path d="M2 3.500h5M2 5.500h5" stroke="#6a6f77" /><circle cx="8.500" cy="9" r="3.300" fill="#2f62a8" /><path d="M7 8c2 0 2 1 1 3M9 6l2 2" stroke="#46a24d" /></svg>
          </button>
          <button aria-label="Outline" className="flex w-[18px] justify-center">
            <svg width="11" height="11" stroke="#72767d" aria-hidden="true"><path d="M0 1.500h7M4 3.500h6M4 5.500h3M6 7.500h5M4 9.500h6" /></svg>
          </button>
          <button aria-label="Draft" className="flex w-[19px] justify-center">
            <svg width="10" height="11" stroke="#55595f" aria-hidden="true"><path d="M0 1.500h10M0 3.500h10M0 5.500h10M0 7.500h10M0 9.500h10" /></svg>
          </button>
        </div>
        <button className="w-[45px] pl-[4px] text-center">120%</button>
        <button aria-label="Zoom out" className="flex h-[15px] w-[15px] items-center justify-center rounded-full border border-[#6f747b] bg-[#f0f2f4]"><span className="h-[2px] w-[7px] bg-[#4a4e55]" /></button>
        <input
          aria-label="Zoom"
          type="range"
          min="0"
          max="100"
          defaultValue="53"
          className="h-[13px] w-[101px] appearance-none bg-linear-to-b from-transparent from-45% via-[#7b8088] via-50% to-transparent to-55% [&::-webkit-slider-thumb]:h-[13px] [&::-webkit-slider-thumb]:w-[9px] [&::-webkit-slider-thumb]:appearance-none [&::-webkit-slider-thumb]:rounded-t-[1px] [&::-webkit-slider-thumb]:rounded-b-[4px] [&::-webkit-slider-thumb]:border [&::-webkit-slider-thumb]:border-[#70757d] [&::-webkit-slider-thumb]:bg-[#f3f4f6]"
        />
        <button aria-label="Zoom in" className="mr-[4px] flex h-[15px] w-[15px] items-center justify-center rounded-full border border-[#6f747b] bg-[#f0f2f4]">
          <svg width="7" height="7" aria-hidden="true"><path d="M0 3.500h7M3.500 0v7" stroke="#4a4e55" strokeWidth="2" /></svg>
        </button>
      </div>
    </footer>
  );
}

/* ---------- taskbar ---------- */

const apps: { name: string; state?: "open" | "active"; icon: ReactNode }[] = [
  { name: "Edge", icon: <path d="M1.500 11C2.500 4 7 1 12.500 1 19 1 21.500 6 21.500 11v3.200H8c.5 4.300 7 5.300 12 2.300v4.500C12 25 3.500 22 3.500 14.500 3.500 11 5.500 8.500 8.800 7.200c-.6 1-.8 2-.8 3h7.200c0-5-8-6-13.700.8z" fill="#0c78d4" /> },
  { name: "File Explorer", icon: <g><path d="M2 3.500h7l2 2h11.500V21H2z" fill="#f3cc5c" /><path d="M2 7h21v14H2z" fill="#fde293" /><path d="M5.500 22v-8h14v8h-4v-4h-6v4z" fill="#38a9dc" /></g> },
  { name: "Store", icon: <g><path d="M2 7.500L21.500 5v18L2 20.500z" fill="#fff" /><path d="M6 7c0-8 7-8 8-1M9 6c1-7 8-7 9-1" fill="none" stroke="#fff" strokeWidth="1.200" /><path d="M5.500 10.500l4.800-.6v4.200H5.500zM11.300 9.800l5.400-.7v5h-5.400zM5.500 15h4.800v4l-4.800-.6zM11.300 15h5.400v5l-5.400-.7z" fill="#050505" /></g> },
  { name: "Tasks", icon: <g><rect width="24" height="24" rx="3" fill="#1a90f2" /><path d="M4.500 5L12 11.500 19.500 5v3L12 14.800 4.500 8zM4.500 11.500L12 18l7.500-6.500v2.800L12 21l-7.500-6.700z" fill="#fff" /></g> },
  { name: "Podcasts", icon: <g><rect width="24" height="24" rx="3" fill="#f1f3f3" /><circle cx="12" cy="12" r="9.800" fill="#20a5d0" /><g fill="none" stroke="#fff" strokeWidth="1.200"><path d="M7.500 18a7 7 0 119 0M9 15.500a4 4 0 116 0" /></g><circle cx="12" cy="12" r="2" fill="#fff" /><path d="M10.500 14.500h3l-.6 6h-1.800z" fill="#fff" /></g> },
  { name: "VirtualBox", icon: <g><path d="M12 1l10 5v12l-10 5.500L2 18V6z" fill="#8ea5c7" /><path d="M2 6l10-5 10 5-10 4.500z" fill="#d3e8e5" /><path d="M2 6l10 4.500v13L2 18z" fill="#a9bfdc" /><path d="M12 10.500L22 6v12l-10 5.500z" fill="#7186b0" /></g> },
  { name: "Visual Studio", icon: <g><path d="M1 5l14-4h8v23H1z" fill="#68217a" /><path d="M2.500 9.500L5 8l4.500 3.500L17.500 3 21.500 4.500v15L17.500 21 9.500 13.300 5 16.500 2.500 15zM17.500 8.500L12.500 12.300l5 3.900zM4.700 10.800v3.200l2.200-1.600z" fill="#fff" fillRule="evenodd" /></g> },
  { name: "Chrome", state: "open", icon: <g><circle cx="11" cy="12" r="11" fill="#e9bf32" /><path d="M11 12L1.500 6.500A11 11 0 0121 7z" fill="#d8473a" /><path d="M11 12L1.500 6.500A11 11 0 009 23z" fill="#269656" /><circle cx="11" cy="12" r="5" fill="#fff" /><circle cx="11" cy="12" r="4" fill="#4285e8" /><path d="M9 12h16v14H9z" fill="#dedede" /><circle cx="17" cy="17" r="2.600" fill="#9a9a9a" /><path d="M12 24c0-5 10-5 10 0z" fill="#9a9a9a" /></g> },
  { name: "iTunes", icon: <g><circle cx="12" cy="12" r="10.500" fill="#f8f8fd" stroke="#d7d6ea" /><path d="M9.500 17V7l7.500-1.500v10" fill="none" stroke="#b15fd2" strokeWidth="1.600" /><path d="M9 8l8.500-1.700" stroke="#e5588f" strokeWidth="2" /><ellipse cx="8" cy="17" rx="2.300" ry="1.800" fill="#5a85df" /><ellipse cx="15.500" cy="15.500" rx="2.300" ry="1.800" fill="#e6528d" /></g> },
  { name: "PicsArt", icon: <g><circle cx="12" cy="12" r="12" fill="#b63f20" /><path d="M6.500 9V6.300h8.300a3.700 3.700 0 010 7.400h-3.500M11.800 6.300L9.500 19.500" fill="none" stroke="#fff" strokeWidth="2.800" /></g> },
  { name: "Media Player", icon: <g><path d="M5 4h16v17H5z" fill="#3f86a8" /><path d="M2.500 4.500h16v17h-16z" fill="#a9d2e6" stroke="#5694b0" /><circle cx="10.500" cy="13" r="6.200" fill="#f38420" /><path d="M8 8.500l7 4.500-7 4.500z" fill="#fff" /></g> },
  { name: "Sublime Text", icon: <g><path d="M2 2h20l1 20H1z" fill="#d6d6d6" /><path d="M3 1h18l1 17H2z" fill="#4a4a4a" /><path d="M15.500 5.200c-3-1.500-7-.8-7 1.500 0 2.800 7 1.300 7 4.300 0 2.500-4.500 3-7.500 1.300" fill="none" stroke="#f29b2e" strokeWidth="1.800" /></g> },
  { name: "Virtual DJ", icon: <g><circle cx="17.500" cy="12" r="7" fill="#353535" /><path d="M17 12l7-2.500v5z" fill="#b5b5b5" /><path d="M1 3l15-3v24L1 21z" fill="#e80d12" /><circle cx="8" cy="12.500" r="4.700" fill="none" stroke="#fff" strokeWidth="1.500" /><circle cx="8" cy="12.500" r="1.800" fill="none" stroke="#fff" strokeWidth="1.300" /><path d="M9.500 11.500l3-5.500" stroke="#fff" strokeWidth="1.300" /></g> },
  { name: "DJ Mixer", icon: <g><path d="M2 10l8 4-8 4.500zM22 10l-8 4 8 4.500z" fill="#5c5c5c" /><path d="M8 7c3-1 4.500-6 8-6.500h6L18.500 5c-1 3.500-5 4-6 8z" fill="#e90e14" /><circle cx="11.500" cy="14" r="3.500" fill="#e90e14" /></g> },
  { name: "Audacity", icon: <g><path d="M4 18C2 1 22 1 20 18" fill="none" stroke="#17179a" strokeWidth="2" /><path d="M6 20c-1-6 2-11 6-11s7 5 6 11c-3 2.500-9 2.500-12 0z" fill="#f2c322" /><path d="M7 16h10M7 17l1.500-3 1.500 5 2-6 2 6 1.500-5 1.500 4" fill="none" stroke="#e0421c" strokeWidth="1.300" /><ellipse cx="4" cy="17" rx="2" ry="4" fill="#1b1bad" /><ellipse cx="20" cy="17" rx="2" ry="4" fill="#1b1bad" /></g> },
  { name: "Avast", state: "open", icon: <g><path d="M2 8c4 1 8-1 11-5 2-4 8-2 7 2-1 3 0 5 2 8 2 4-2 6-4 5-2 0-2 2-3 4-1 3-5 3-6 0-1-2-3-2-6-1-4 0-4-5-1-6 3-2 2-3 0-7z" fill="#f57a17" /><circle cx="11.500" cy="12.500" r="2.700" fill="none" stroke="#fff" strokeWidth="2" /><path d="M14.500 9v7" stroke="#fff" strokeWidth="2" /></g> },
  { name: "Word", state: "active", icon: <g><path d="M1.500.5h21v21h-21z" fill="#dceafa" stroke="#6ba0dc" /><path d="M2 15h20v6H2z" fill="#a9cbee" /><path d="M2 5h4.500M8 5h4M13 5h4.500" stroke="#1b5cb0" strokeWidth="1.500" /><path d="M4.500 5l3 11 3.200-10L14 16l3-11" fill="none" stroke="#1b5cb0" strokeWidth="3" /><path d="M18.500 5H22M18.500 9H22M18 13h4" stroke="#82b1e5" /><path d="M16 16l6 1v5l-6-1z" fill="#fff" /></g> },
];

function Wallpaper() {
  return (
    <svg className="pointer-events-none absolute inset-0 h-full w-full" fill="none" aria-hidden="true">
      <ellipse cx="45" cy="-4" rx="24" ry="14" stroke="#111a18" strokeWidth="5" />
      <ellipse cx="855" cy="2" rx="14" ry="8" fill="#1d1a15" />
      <ellipse cx="978" cy="-6" rx="24" ry="15" stroke="#1e2522" strokeWidth="4" />
      <path d="M980 23h70l14-9h190l12 9h100" stroke="#10131c" strokeWidth="3" />
      <path d="M1113 40c0-10 3-13 12-13h241v13z" fill="#111215" />
    </svg>
  );
}

function Taskbar() {
  return (
    <footer className="relative h-10 shrink-0 overflow-hidden bg-linear-to-r from-[#030404] via-[#020203] to-[#06070b] font-['Open_Sans','Noto_Sans',sans-serif] text-white">
      <Wallpaper />
      <div className="relative flex h-full items-stretch">
        <button aria-label="Start" className="flex w-12 items-center justify-center">
          <svg width="16" height="16" viewBox="0 0 16 16" fill="#fff" aria-hidden="true"><path d="M0 2.300L6.500 1.400v6.100H0zM7.300 1.300L16 0v7.500H7.300zM0 8.300h6.500v6.200L0 13.600zM7.300 8.300H16V16l-8.700-1.300z" /></svg>
        </button>
        <button aria-label="Cortana" className="flex w-12 items-center justify-center"><span className="h-[15px] w-[15px] rounded-full border-2 border-white" /></button>
        <button aria-label="Task view" className="flex w-[50px] items-center justify-start pl-[14px]">
          <svg width="20" height="14" viewBox="0 0 20 14" fill="none" stroke="#fff" aria-hidden="true"><path d="M4.500.5h11v13h-11zM2.500 2.500h-2v9h2M17.500 2.500h2v9h-2" /></svg>
        </button>
        {apps.map((a) => (
          <button
            key={a.name}
            aria-label={a.name}
            className={
              a.state === "active"
                ? "flex w-[49px] items-center justify-center border-b-2 border-[#76a9f5] bg-[#333437]"
                : a.state === "open"
                  ? "mx-1 flex w-[41px] items-center justify-center border-b-2 border-[#76a9f5]"
                  : "flex w-[49px] items-center justify-center"
            }
          >
            <svg width="24" height="24" viewBox="0 0 24 24" overflow="visible" aria-hidden="true">{a.icon}</svg>
          </button>
        ))}
        <div className="ml-auto flex items-center">
          <button aria-label="Show hidden icons" className="flex w-6 justify-center">
            <svg width="12" height="7" fill="none" stroke="#fff" strokeWidth="1.300" aria-hidden="true"><path d="M.5 6.500l5.500-6 5.500 6" /></svg>
          </button>
          <button aria-label="Network" className="flex w-[25px] justify-center">
            <svg width="16" height="16" viewBox="0 0 16 16" fill="none" stroke="#85888c" strokeWidth="1.200" aria-hidden="true">
              <path d="M4 15C4 8 8 4 15 4M7 15c0-4 3-8 8-8M10 15c0-3 2-5 5-5" /><circle cx="14" cy="14" r="1.400" fill="#85888c" stroke="none" />
              <path d="M2 0v5M0 1l4 3M4 1L0 4" stroke="#fff" />
            </svg>
          </button>
          <button aria-label="Battery" className="flex w-[23px] justify-center">
            <svg width="15" height="9" fill="none" stroke="#fff" aria-hidden="true"><path d="M.5.5h12v8H.5zM14 3v3" /><path d="M2 2h4v5H2z" fill="#fff" stroke="none" /></svg>
          </button>
          <button aria-label="Volume" className="flex w-[24px] justify-center">
            <svg width="17" height="13" viewBox="0 0 17 13" fill="none" stroke="#fff" strokeWidth="1.100" aria-hidden="true"><path d="M.5 4.500H3L6 1.500v10l-3-3H.5zM8.500 4.500c1 1 1 3 0 4M11 2.500c2 2 2 6 0 8M13.500 1c3 3 3 8 0 11" /></svg>
          </button>
          <button className="flex w-[34px] flex-col items-center text-[11px] leading-[17px]"><span>ESP</span><span>LAA</span></button>
          <button className="flex w-[74px] flex-col items-center text-[11px] leading-[17px]"><span>10:44</span><span>24/01/2017</span></button>
          <button aria-label="Notifications" className="flex w-[46px] justify-center">
            <svg width="26" height="26" viewBox="0 0 26 26" aria-hidden="true">
              <path d="M1 1h16v12H8l-3 4v-4H1z" fill="#fff" /><path d="M4 4.500h10M4 7.500h10M4 10.500h7" stroke="#222" />
              <circle cx="16.500" cy="17" r="7.500" fill="#34363a" stroke="#909398" />
              <text x="13" y="21" fontSize="12" fill="#fff" fontFamily="Open Sans, sans-serif">1</text>
            </svg>
          </button>
          <span className="h-10 w-[5px] border-l border-[#55585e]" />
        </div>
      </div>
    </footer>
  );
}

export default function App() {
  return (
    <div className="flex h-screen flex-col overflow-hidden bg-white font-['Noto_Sans','Open_Sans',sans-serif] text-[11px] leading-4">
      <TitleBar />
      <TabRow />
      <div className="flex h-[85px] shrink-0 bg-linear-to-b from-white to-[#e8ebef]">
        <Clipboard />
        <FontGroup />
        <Paragraph />
        <Styles />
        <Editing />
      </div>
      <Workspace />
      <StatusBar />
      <Taskbar />
    </div>
  );
}
